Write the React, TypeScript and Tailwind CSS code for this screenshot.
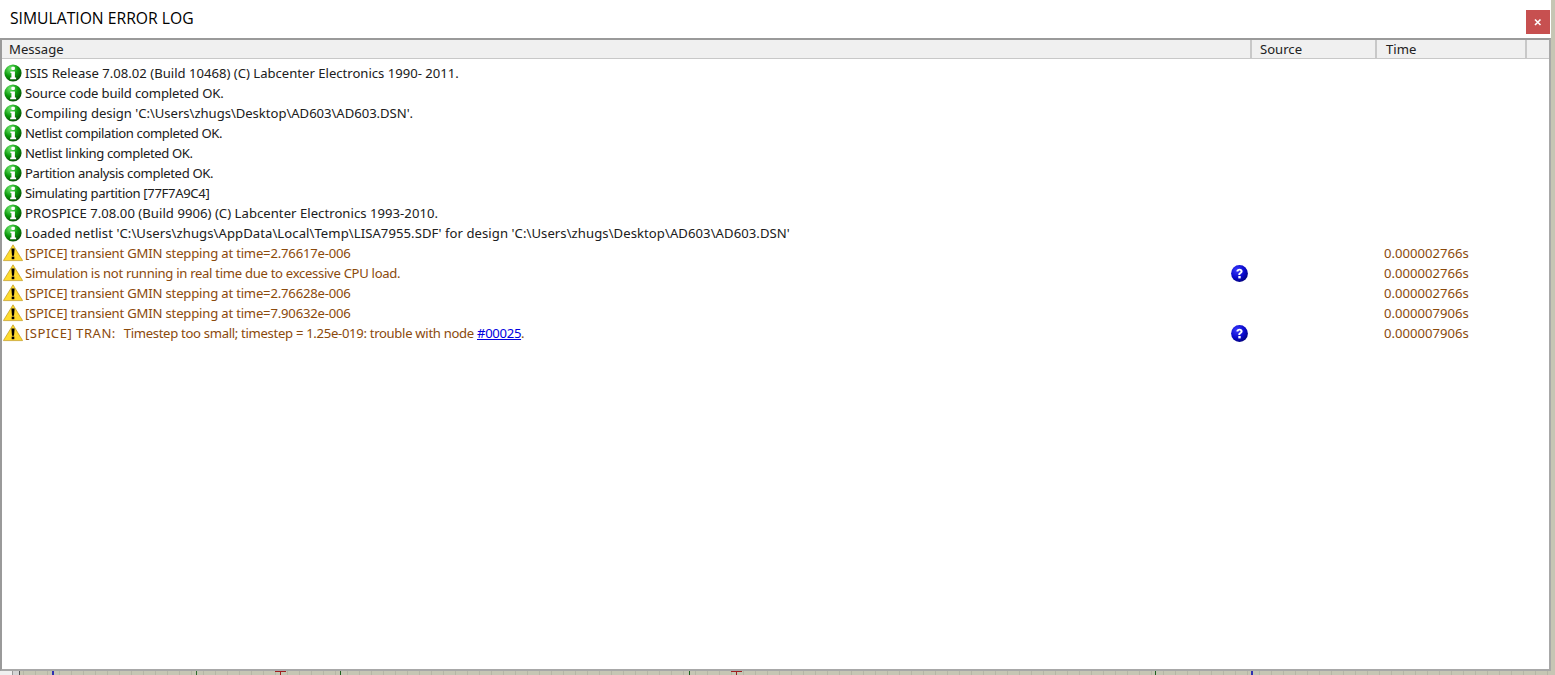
import { useId } from 'react';

type Row = {
  kind: 'info' | 'warn';
  text: string;
  lead?: string;
  link?: string;
  help?: boolean;
  time?: string;
  tight?: string;
};

const ROWS: Row[] = [
  { kind: 'info', text: 'ISIS Release 7.08.02 (Build 10468) (C) Labcenter Electronics 1990- 2011.' },
  { kind: 'info', text: 'Source code build completed OK.', tight: 'tracking-[-0.16px]' },
  { kind: 'info', text: "Compiling design 'C:\\Users\\zhugs\\Desktop\\AD603\\AD603.DSN'.", tight: 'tracking-[-0.03px]' },
  { kind: 'info', text: 'Netlist compilation completed OK.', tight: 'tracking-[-0.39px]' },
  { kind: 'info', text: 'Netlist linking completed OK.', tight: 'tracking-[-0.38px]' },
  { kind: 'info', text: 'Partition analysis completed OK.', tight: 'tracking-[-0.34px]' },
  { kind: 'info', text: 'Simulating partition [77F7A9C4]', tight: 'tracking-[-0.35px]' },
  { kind: 'info', text: 'PROSPICE 7.08.00 (Build 9906) (C) Labcenter Electronics 1993-2010.', tight: 'tracking-[0.04px]' },
  { kind: 'info', text: "Loaded netlist 'C:\\Users\\zhugs\\AppData\\Local\\Temp\\LISA7955.SDF' for design 'C:\\Users\\zhugs\\Desktop\\AD603\\AD603.DSN'", tight: 'tracking-[0.07px]' },
  { kind: 'warn', text: '[SPICE] transient GMIN stepping at time=2.76617e-006', time: '0.000002766s', tight: 'tracking-[-0.19px]' },
  { kind: 'warn', text: 'Simulation is not running in real time due to excessive CPU load.', help: true, time: '0.000002766s', tight: 'tracking-[-0.3px]' },
  { kind: 'warn', text: '[SPICE] transient GMIN stepping at time=2.76628e-006', time: '0.000002766s', tight: 'tracking-[-0.19px]' },
  { kind: 'warn', text: '[SPICE] transient GMIN stepping at time=7.90632e-006', time: '0.000007906s', tight: 'tracking-[-0.19px]' },
  { kind: 'warn', lead: '[SPICE] TRAN:  ', text: 'Timestep too small; timestep = 1.25e-019: trouble with node ', link: '#00025', help: true, time: '0.000007906s', tight: 'tracking-[-0.31px]' },
];

function InfoIcon() {
  const id = useId();
  return (
    <svg width="18" height="18" viewBox="0 0 18 18" className="shrink-0">
      <defs>
        <radialGradient id={id} cx="0.35" cy="0.25" r="0.85">
          <stop offset="0" stopColor="#6fe86f" />
          <stop offset="0.5" stopColor="#0c9a0c" />
          <stop offset="1" stopColor="#033f03" />
        </radialGradient>
      </defs>
      <circle cx="9" cy="9" r="8.6" fill={`url(#${id})`} />
      <rect x="7.3" y="2.8" width="3.6" height="3.2" rx="1" fill="#fff" />
      <path d="M6.4 7.4h4.5v6.2h1.2v1.7H6.2v-1.7h1.2V9.1h-1z" fill="#fff" />
    </svg>
  );
}

function WarnIcon() {
  return (
    <svg width="20" height="18" viewBox="0 0 20 18" className="shrink-0">
      <path d="M10 .8 19.6 16.6H.4z" fill="#ffdc2e" stroke="#c09a20" strokeWidth="0.7" strokeLinejoin="round" />
      <path d="M8.4 4.6h3.2l-.6 7.2H9z" fill="#000" />
      <rect x="8.7" y="12.6" width="2.6" height="2.6" fill="#000" />
    </svg>
  );
}

function HelpIcon() {
  const id = useId();
  return (
    <svg width="17" height="17" viewBox="0 0 17 17">
      <defs>
        <radialGradient id={id} cx="0.35" cy="0.3" r="0.8">
          <stop offset="0" stopColor="#3a3aff" />
          <stop offset="0.6" stopColor="#0808c8" />
          <stop offset="1" stopColor="#020270" />
        </radialGradient>
      </defs>
      <circle cx="8.5" cy="8.5" r="8.4" fill={`url(#${id})`} />
      <path d="M5.4 6.5c0-1.8 1.4-2.8 3.2-2.8s3 1 3 2.6c0 1.2-.7 1.8-1.6 2.4-.6.4-.8.6-.8 1.3H7.3c0-1.3.4-1.9 1.2-2.4.7-.4 1-.7 1-1.2s-.4-.8-1-.8-1 .4-1 1z" fill="#fff" />
      <rect x="7.3" y="11" width="2.4" height="2.4" fill="#fff" />
    </svg>
  );
}

function HeaderCell({ label, className }: { label: string; className: string }) {
  return (
    <div className={`flex h-[18px] items-center border-r-2 border-r-[#c8c8c8] pt-[2px] ${className}`}>
      {label}
    </div>
  );
}

const MARKS = [
  { left: 'left-[52px] w-[2px]', color: 'bg-[#3030b0]' },
  { left: 'left-[196px] w-px', color: 'bg-[#2f6b2f]' },
  { left: 'left-[340px] w-px', color: 'bg-[#1f5f1f]' },
  { left: 'left-[689px] w-px', color: 'bg-[#1f5f1f]' },
  { left: 'left-[1155px] w-px', color: 'bg-[#1f5f1f]' },
  { left: 'left-[1251px] w-[2px]', color: 'bg-[#3030b0]' },
];

export default function App() {
  return (
    <div className="relative h-[675px] w-[1555px] overflow-hidden bg-[#c6c6b4] bg-[repeating-linear-gradient(90deg,#c6c6b4_0,#c6c6b4_11px,#b6b6a6_11px,#b6b6a6_12px)] font-['Noto_Sans',sans-serif]">
      {/* schematic marks peeking out below the dialog */}
      <span className="absolute bottom-0 left-0 h-[5px] w-[20px] border-r border-r-[#555] bg-[#d4d4d4]">
        <span className="block h-full w-[13px] border-r border-r-[#999] bg-[#f0f0f0]" />
      </span>
      {MARKS.map((m) => (
        <span key={m.left} className={`absolute bottom-0 h-[5px] ${m.left} ${m.color}`} />
      ))}
      <span className="absolute bottom-0 left-[275px] h-[4px] w-[11px] border-t border-[#a02020]">
        <span className="mx-auto block h-full w-px bg-[#a02020]" />
      </span>
      <span className="absolute bottom-0 left-[731px] h-[4px] w-[11px] border-t border-[#a02020]">
        <span className="mx-auto block h-full w-px bg-[#a02020]" />
      </span>

      <div className="relative flex h-[671px] w-[1551px] flex-col bg-white">
        <div className="flex h-[38px] shrink-0 items-start justify-between pr-[1px]">
          <span className="mt-[8px] ml-[10px] font-['Open_Sans',sans-serif] text-[15.7px] leading-[21px] text-black">
            SIMULATION ERROR LOG
          </span>
          <button className="mt-[10px] flex h-[24px] w-[24px] items-center justify-center bg-[#c75050]">
            <svg width="8" height="8" viewBox="0 0 8 8">
              <path d="M1 1.5 6.5 7M6.5 1.5 1 7" stroke="#fff" strokeWidth="1.6" />
            </svg>
          </button>
        </div>

        <div className="flex min-h-0 flex-1 flex-col border-2 border-[#9a9a9a] border-r-[#a8a8a8] border-b-[#a8a8a8]">
          <div className="flex h-[19px] shrink-0 border-b border-[#c8c8c8] bg-[#f0f0f0] text-[13.1px] text-[#222]">
            <HeaderCell label="Message" className="w-[1250px] pl-[7px]" />
            <HeaderCell label="Source" className="w-[125px] pl-[8px]" />
            <HeaderCell label="Time" className="w-[150px] pl-[9px]" />
          </div>

          <div className="flex flex-col pt-[4px] text-[13.1px] leading-[20px]">
            {ROWS.map((row, i) => (
              <div key={i} className="flex h-[20px] items-center">
                <div className="flex w-[1248px] items-center">
                  <div className="flex w-[23px] shrink-0 justify-center pr-[1px]">
                    {row.kind === 'info' ? <InfoIcon /> : <WarnIcon />}
                  </div>
                  <span
                    className={`flex-1 whitespace-pre ${row.tight ?? ''} ${row.kind === 'info' ? 'text-[#202020]' : 'text-[#8b4a0c]'}`}
                  >
                    {row.lead && <span className="tracking-[0.5px]">{row.lead}</span>}
                    {row.text}
                    {row.link && <a className="text-[#0000e0] underline">{row.link}</a>}
                    {row.link && '.'}
                  </span>
                  {row.help && <HelpIcon />}
                  <span className="w-[2px]" />
                </div>
                <div className="w-[134px]" />
                <span className="text-[#8b4a0c]">{row.time}</span>
              </div>
            ))}
          </div>
        </div>
      </div>
    </div>
  );
}
